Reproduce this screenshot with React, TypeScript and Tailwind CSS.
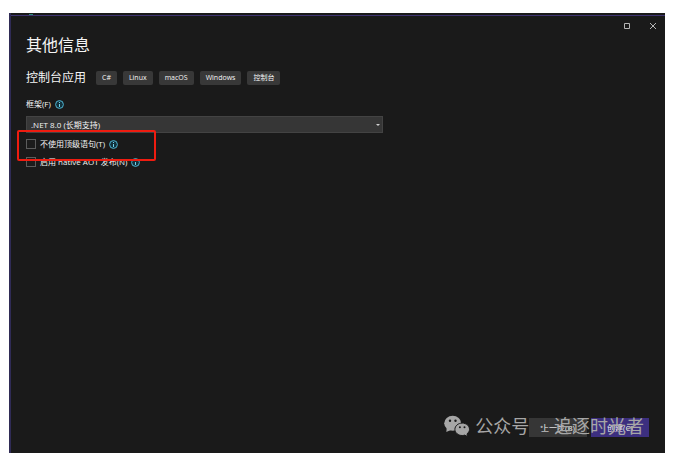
import { useState } from "react";

// 项目标签
const tags = ["C#", "Linux", "macOS", "Windows", "控制台"];

// 可选框架
const frameworks = [".NET 8.0 (长期支持)"];

// 复选框选项
const options = [
  { id: "top-level", label: "不使用顶级语句(T)" },
  { id: "native-aot", label: "启用 native AOT 发布(N)" },
];

function InfoIcon() {
  return (
    <svg viewBox="0 0 9 9" className="size-[9px] shrink-0" fill="none" aria-hidden="true">
      <circle cx="4.5" cy="4.5" r="3.9" fill="#12323d" stroke="#4fb3d0" />
      <path d="M4.5 4v3M4.5 2v1" stroke="#6fd0ea" />
    </svg>
  );
}

function WechatIcon() {
  return (
    <svg viewBox="0 0 26 22" className="h-[22px] w-[26px] shrink-0" aria-hidden="true">
      <g fill="#a6a6a6">
        <ellipse cx="8.7" cy="8.2" rx="8.5" ry="7.5" />
        <path d="M2.8 12.5l-.5 4.5 4.5-2z" />
      </g>
      <path
        fill="#a6a6a6"
        stroke="#1a1a1a"
        d="M25.5 14.300c0-3.500-3.300-6.200-7.300-6.200s-7.300 2.800-7.300 6.200c0 3.500 3.300 6.200 7.300 6.200.9 0 1.700-.1 2.500-.4l3 1.500-.7-2.700c1.500-1.200 2.500-2.700 2.500-4.600z"
      />
      <g fill="#1a1a1a">
        <circle cx="6" cy="5.8" r="1.2" />
        <circle cx="11.5" cy="5.8" r="1.2" />
        <circle cx="15.9" cy="12.3" r="1" />
        <circle cx="20.5" cy="12.3" r="1" />
      </g>
    </svg>
  );
}

export default function App() {
  const [framework, setFramework] = useState(frameworks[0]);

  return (
    <div className="flex min-h-screen bg-white px-[9px] pt-[13px] pb-1 font-['Open_Sans','Noto_Sans_CJK_SC',sans-serif] text-[8px] leading-3 text-[#f5f5f5]">
      <main className="relative flex flex-1 flex-col border-l-2 border-[#2f2b55] bg-[#1a1a1a] pt-0.5">
        {/* 背后编辑器露出的一角 */}
        <div className="absolute top-px left-[18px] h-px w-1 bg-[#2c8c78]" />

        {/* 窗口按钮 */}
        <header className="flex h-5 justify-end gap-[18px] border-t border-t-[#3f3472] pt-1.5 pr-2 text-[#b5b5b5]">
          <button aria-label="最大化" className="size-2">
            <svg viewBox="0 0 8 8" className="size-2" fill="none" stroke="currentColor">
              <path d="M1.5 1.5h5v5h-5z" />
            </svg>
          </button>
          <button aria-label="关闭" className="size-2">
            <svg viewBox="0 0 8 8" className="size-2" fill="none" stroke="currentColor">
              <path d="M1 1l6 6M7 1L1 7" />
            </svg>
          </button>
        </header>

        <div className="flex-1 px-[15px]">
          <h1 className="text-base leading-5">其他信息</h1>

          {/* 项目类型和标签 */}
          <div className="mt-[15px] flex items-center gap-1.5">
            <h2 className="mr-1 text-xs leading-4">控制台应用</h2>
            {tags.map((tag) => (
              <span key={tag} className="rounded-xs bg-[#383838] px-1.5 py-px text-[7px] leading-3">
                {tag}
              </span>
            ))}
          </div>

          {/* 框架选择 */}
          <div className="mt-3 flex items-center gap-1">
            <label htmlFor="framework">框架(F)</label>
            <InfoIcon />
          </div>
          <div className="relative mt-1.5 w-[57.2%]">
            <select
              id="framework"
              value={framework}
              onChange={(e) => setFramework(e.target.value)}
              className="block h-[17px] w-full appearance-none border border-[#434343] bg-[#363636] pl-1 leading-3"
            >
              {frameworks.map((name) => (
                <option key={name}>{name}</option>
              ))}
            </select>
            <svg
              viewBox="0 0 4 2"
              className="pointer-events-none absolute top-2 right-[3px] h-0.5 w-1"
              fill="#d0d0d0"
              aria-hidden="true"
            >
              <path d="M0 0h4L2 2z" />
            </svg>
          </div>

          {/* 选项，第一项用红框标出 */}
          <div className="relative mt-[5px] space-y-1.5">
            {options.map((option) => (
              <div key={option.id} className="flex items-center gap-1">
                <input
                  type="checkbox"
                  id={option.id}
                  className="size-2.5 appearance-none border border-[#5c5c5c] bg-[#1c1c1c] checked:bg-[#3c2f7f]"
                />
                <label htmlFor={option.id}>{option.label}</label>
                <InfoIcon />
              </div>
            ))}
            <div className="pointer-events-none absolute -top-2 -left-[9px] h-[31px] w-[139px] rounded-xs border-2 border-[#ef1c10]" />
          </div>
        </div>

        {/* 底部按钮 */}
        <footer className="flex justify-end gap-1 pr-4 pb-4">
          <button className="h-[19px] w-[58px] bg-[#363636]">上一步(B)</button>
          <button className="h-[19px] w-[58px] bg-[#3c2f7f]">创建(C)</button>
        </footer>

        {/* 公众号水印 */}
        <div className="pointer-events-none absolute right-[21px] bottom-[15px] flex items-center gap-[5px] text-lg leading-6 whitespace-nowrap text-[#a6a6a6]">
          <WechatIcon />
          <p className="flex gap-2.5">
            <span>公众号</span>
            <span>·</span>
            <span>追逐时光者</span>
          </p>
        </div>
      </main>
    </div>
  );
}
